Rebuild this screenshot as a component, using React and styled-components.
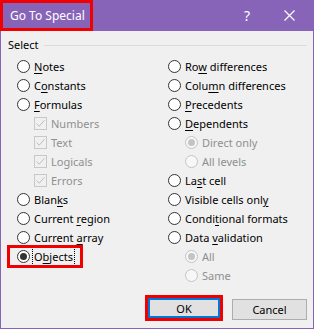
import React from "react";
import styled, { createGlobalStyle } from "styled-components";

const GlobalStyle = createGlobalStyle`
  html, body {
    margin: 0;
    padding: 0;
    background: #fff;
  }
  body {
    font-family: "Noto Sans", "Open Sans", sans-serif;
    font-size: 11px;
  }
`;

const Window = styled.div`
  width: 314px;
  height: 329px;
  box-sizing: border-box;
  background: #f0f0f0;
  border: 1px solid #8764b8;
  border-top: none;
  display: flex;
  flex-direction: column;
`;

const TitleBar = styled.div`
  height: 31px;
  flex: none;
  background: #8764b8;
  color: #fff;
  display: flex;
  align-items: center;
  margin: 0 -1px;
`;

const Title = styled.span`
  height: 31px;
  box-sizing: border-box;
  border: 3px solid #f00000;
  padding: 0 5px 0 7px;
  display: flex;
  align-items: center;
  font-size: 12px;
`;

const TitleButtons = styled.div`
  margin-left: auto;
  display: flex;
  align-items: center;
  gap: 34px;
  padding-right: 19px;
  font-size: 14px;
`;

const Body = styled.div`
  flex: 1;
  padding: 6px 6px 0 7px;
  display: flex;
  flex-direction: column;
`;

const Legend = styled.div`
  display: flex;
  align-items: center;
  gap: 5px;
  line-height: 15px;
  color: #000;
  &::after {
    content: "";
    flex: 1;
    height: 1px;
    background: #dcdcdc;
    margin-top: 1px;
  }
`;

const Columns = styled.div`
  display: grid;
  grid-template-columns: 151px 1fr;
  margin-top: 5px;
  padding-left: 9px;
`;

const Column = styled.div`
  display: flex;
  flex-direction: column;
`;

const Row = styled.div`
  height: 19px;
  display: flex;
  align-items: center;
  padding-left: ${(p) => (p.$indent ? 17 : 0)}px;
  color: ${(p) => (p.$disabled ? "#8f8f8f" : "#000")};
  white-space: nowrap;
`;

const Highlight = styled.span`
  display: inline-flex;
  align-items: center;
  height: 17px;
  padding: 0 5px 0 7px;
  margin: 0 0 0 -7px;
  outline: 3px solid #f00000;
`;

const Radio = styled.span`
  width: 13px;
  height: 13px;
  box-sizing: border-box;
  border-radius: 50%;
  border: 1px solid ${(p) => (p.$disabled ? "#c4c4c4" : "#333")};
  background: ${(p) => (p.$disabled ? "#f7f7f7" : "#fff")};
  margin-right: 4px;
  flex: none;
  display: flex;
  align-items: center;
  justify-content: center;
  &::after {
    content: "";
    display: ${(p) => (p.$checked ? "block" : "none")};
    width: 7px;
    height: 7px;
    border-radius: 50%;
    background: ${(p) => (p.$disabled ? "#c4c4c4" : "#333")};
  }
`;

const Check = styled.span`
  width: 13px;
  height: 13px;
  box-sizing: border-box;
  border: 1px solid #c8c8c8;
  background: #f0f0f0;
  margin-right: 4px;
  flex: none;
  display: flex;
  align-items: center;
  justify-content: center;
`;

const Label = styled.span`
  padding: 1px 1px;
  border: 1px dotted ${(p) => (p.$focus ? "#000" : "transparent")};
  margin-left: -2px;
  u {
    text-decoration-thickness: 1px;
    text-underline-offset: 2px;
  }
`;

const Footer = styled.div`
  margin-top: auto;
  height: 41px;
  display: flex;
  align-items: flex-start;
  justify-content: flex-end;
  gap: 9px;
`;

const FocusBox = styled.span`
  border: 3px solid #f00000;
  display: flex;
  margin-top: 8px;
`;

const Button = styled.button`
  width: ${(p) => (p.$default ? 72 : 75)}px;
  height: ${(p) => (p.$default ? 20 : 21)}px;
  box-sizing: border-box;
  background: #e1e1e1;
  border: ${(p) => (p.$default ? "2px solid #0078d7" : "1px solid #adadad")};
  font-family: inherit;
  font-size: 11px;
  color: #000;
  padding: 0;
  margin-top: ${(p) => (p.$default ? 0 : 12)}px;
`;

const CheckMark = () => (
  <svg width="11" height="11" viewBox="0 0 11 11">
    <path d="M1.5 5.5 L4.2 8.2 L9.5 2.2" fill="none" stroke="#bdbdbd" strokeWidth="1" />
  </svg>
);

const left = [
  { t: ["", "N", "otes"] },
  { t: ["C", "o", "nstants"] },
  { t: ["", "F", "ormulas"] },
  { t: ["Numbers"], check: true },
  { t: ["Text"], check: true },
  { t: ["Logicals"], check: true },
  { t: ["Errors"], check: true },
  { t: ["Blan", "k", "s"] },
  { t: ["Current ", "r", "egion"] },
  { t: ["Current ", "a", "rray"] },
  { t: ["O", "b", "jects"], checked: true, focus: true },
];

const right = [
  { t: ["Ro", "w", " differences"] },
  { t: ["Colu", "m", "n differences"] },
  { t: ["", "P", "recedents"] },
  { t: ["", "D", "ependents"] },
  { t: ["Direct only"], sub: true, checked: true },
  { t: ["All levels"], sub: true },
  { t: ["La", "s", "t cell"] },
  { t: ["Visible cells onl", "y", ""] },
  { t: ["Condi", "t", "ional formats"] },
  { t: ["Data ", "v", "alidation"] },
  { t: ["All"], sub: true, checked: true },
  { t: ["Same"], sub: true },
];

const Text = ({ t }) =>
  t.length === 1 ? (
    t[0]
  ) : (
    <>
      {t[0]}
      <u>{t[1]}</u>
      {t[2]}
    </>
  );

const Item = ({ item }) => {
  const disabled = item.check || item.sub;
  const content = (
    <>
      {item.check ? (
        <Check>
          <CheckMark />
        </Check>
      ) : (
        <Radio $checked={item.checked} $disabled={disabled} />
      )}
      <Label $focus={item.focus}>
        <Text t={item.t} />
      </Label>
    </>
  );
  return (
    <Row $indent={disabled} $disabled={disabled}>
      {item.focus ? <Highlight>{content}</Highlight> : content}
    </Row>
  );
};

export default function App() {
  return (
    <>
      <GlobalStyle />
      <Window>
        <TitleBar>
          <Title>Go To Special</Title>
          <TitleButtons>
            <span>?</span>
            <svg width="11" height="11" viewBox="0 0 11 11">
              <path d="M0.5 0.5 L10.5 10.5 M10.5 0.5 L0.5 10.5" stroke="#fff" strokeWidth="1.2" />
            </svg>
          </TitleButtons>
        </TitleBar>
        <Body>
          <Legend>Select</Legend>
          <Columns>
            <Column>
              {left.map((item, i) => (
                <Item key={i} item={item} />
              ))}
            </Column>
            <Column>
              {right.map((item, i) => (
                <Item key={i} item={item} />
              ))}
            </Column>
          </Columns>
          <Footer>
            <FocusBox>
              <Button $default>OK</Button>
            </FocusBox>
            <Button>Cancel</Button>
          </Footer>
        </Body>
      </Window>
    </>
  );
}
